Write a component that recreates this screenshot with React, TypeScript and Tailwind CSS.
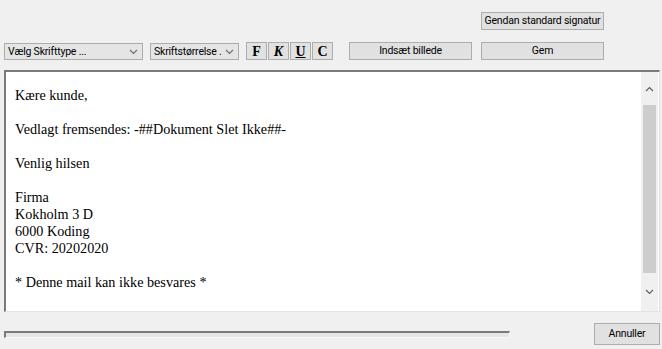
import React from 'react';

const ui = { fontFamily: 'Roboto, "Liberation Sans", Arial, sans-serif' };
const serif = { fontFamily: '"Liberation Serif", "Times New Roman", serif' };

function Chevron({ up = false, className = '' }: { up?: boolean; className?: string }) {
    return (
        <svg className={className} width="9" height="6" viewBox="0 0 9 6" fill="none" stroke="currentColor" strokeWidth="1.2">
            {up ? <polyline points="1 5 4.5 1.5 8 5" /> : <polyline points="1 1 4.5 4.5 8 1" />}
        </svg>
    );
}

function Select({ label, width, margin }: { label: string; width: string; margin: string }) {
    return (
        <div className={`${width} ${margin} h-[17px] mt-[1px] flex items-center justify-between bg-[#e5e5e5] border border-[#acacac] pl-[3px] pr-[4px] text-[10.5px] tracking-[-0.2px] text-black`}>
            <span className="whitespace-nowrap overflow-hidden">{label}</span>
            <Chevron className="text-[#6d6d6d] shrink-0 ml-[3px]" />
        </div>
    );
}

function WinButton({ label, className = '' }: { label: string; className?: string }) {
    return (
        <button className={`h-[18px] flex items-center justify-center bg-[#e1e1e1] border border-[#adadad] text-[10.5px] tracking-[-0.2px] whitespace-nowrap text-black ${className}`}>
            {label}
        </button>
    );
}

function StyleButton({ children, className = '' }: { children: React.ReactNode; className?: string }) {
    return (
        <button
            className={`w-[21px] h-[18px] flex items-center justify-center bg-[#e1e1e1] border border-[#adadad] text-[14px] font-bold text-black ${className}`}
            style={serif}
        >
            {children}
        </button>
    );
}

export default function App() {
    const lines = [
        'Kære kunde,',
        '',
        'Vedlagt fremsendes: -##Dokument Slet Ikke##-',
        '',
        'Venlig hilsen',
        '',
        'Firma',
        'Kokholm 3 D',
        '6000 Koding',
        'CVR: 20202020',
        '',
        '* Denne mail kan ikke besvares *',
    ];

    return (
        <div className="w-[662px] h-[349px] bg-[#f0f0f0] flex flex-col overflow-hidden" style={ui}>
            {/* top right action */}
            <div className="flex mt-[12px]">
                <WinButton label="Gendan standard signatur" className="ml-[481px] w-[123px]" />
            </div>

            {/* toolbar */}
            <div className="flex items-start mt-[12px] h-[18px]">
                <Select label="Vælg Skrifttype ..." width="w-[139px]" margin="ml-[4px]" />
                <Select label="Skriftstørrelse ." width="w-[89px]" margin="ml-[7px]" />
                <StyleButton className="ml-[7px]">F</StyleButton>
                <StyleButton className="ml-[1px] italic">K</StyleButton>
                <StyleButton className="ml-[1px]"><span className="underline">U</span></StyleButton>
                <StyleButton className="ml-[1px]">C</StyleButton>
                <WinButton label="Indsæt billede" className="ml-[16px] w-[123px]" />
                <WinButton label="Gem" className="ml-[9px] w-[123px]" />
            </div>

            {/* editor */}
            <div className="ml-[4px] mt-[10px] w-[656px] h-[242px] bg-white border-t-2 border-l-2 border-b border-r border-t-[#7a7a7a] border-l-[#7a7a7a] border-b-[#e3e3e3] border-r-[#e3e3e3] flex">
                <div className="flex-1 pl-[9px] pt-[15px] text-[14.2px] leading-[17px] text-black" style={serif}>
                    {lines.map((l, i) => (
                        <div key={i} className="h-[17px] whitespace-nowrap">{l}</div>
                    ))}
                </div>
                <div className="w-[17px] mr-[1px] bg-[#f0f0f0] flex flex-col items-center">
                    <div className="h-[33px] flex items-center justify-center text-[#606060]">
                        <Chevron up />
                    </div>
                    <div className="w-[13px] flex-1 bg-[#cdcdcd]" />
                    <div className="h-[38px] flex items-center justify-center text-[#606060]">
                        <Chevron />
                    </div>
                </div>
            </div>

            {/* footer */}
            <div className="flex items-center mt-[11px] h-[22px]">
                <div className="ml-[4px] w-[506px] h-[7px] bg-[#e6e6e6] border-t-2 border-l-2 border-b border-r border-t-[#7a7a7a] border-l-[#7a7a7a] border-b-[#f8f8f8] border-r-[#f8f8f8]" />
                <WinButton label="Annuller" className="ml-auto mr-[2px] w-[66px] h-[22px]" />
            </div>
        </div>
    );
}
